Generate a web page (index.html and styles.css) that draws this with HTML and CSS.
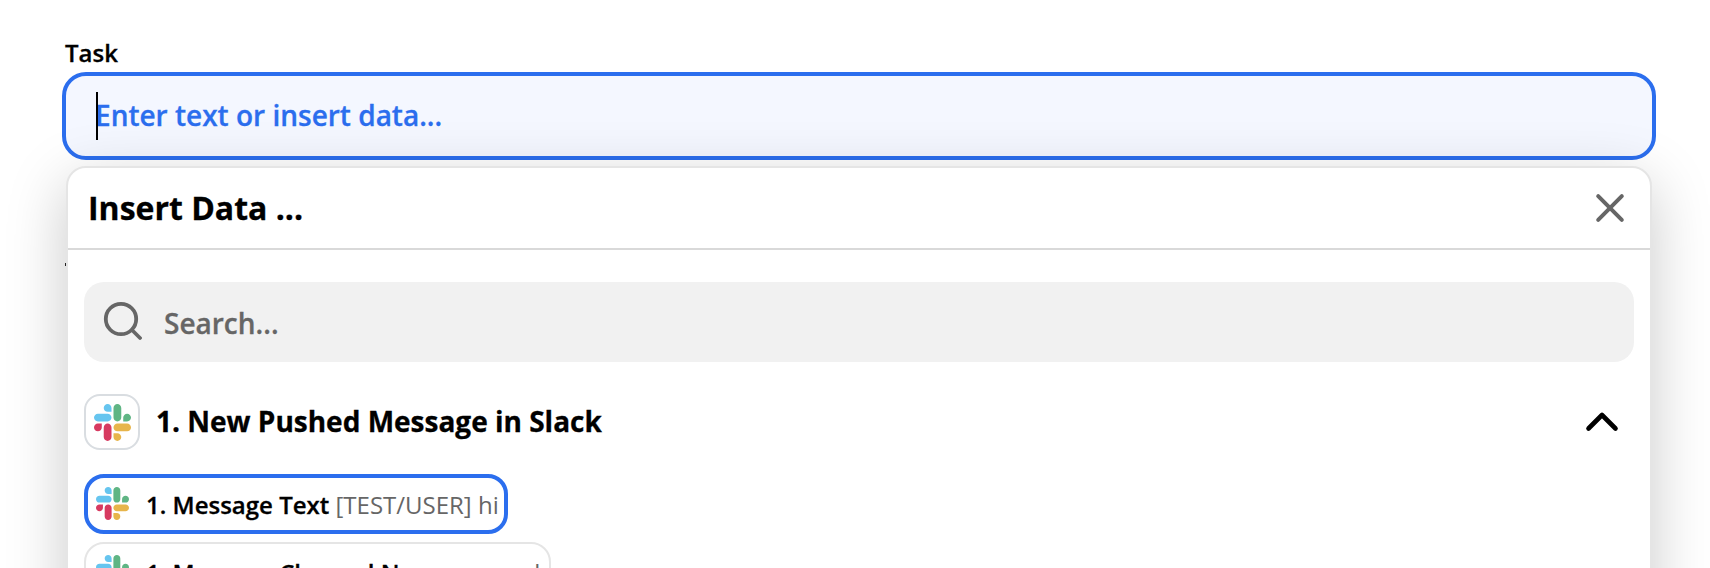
FILE: index.html
```html
<!DOCTYPE html>
<html lang="en">
<head>
<meta charset="utf-8">
<title>Insert Data</title>
<link rel="stylesheet" href="styles.css">
</head>
<body>
<svg class="defs" width="0" height="0" aria-hidden="true">
  <symbol id="slack" viewBox="0 0 122.8 122.8">
    <path fill="#d73a60" d="M25.8 77.6c0 7.1-5.8 12.9-12.9 12.9S0 84.7 0 77.6s5.8-12.9 12.9-12.9h12.9v12.9zM32.3 77.6c0-7.1 5.8-12.9 12.9-12.9s12.9 5.8 12.9 12.9v32.3c0 7.1-5.8 12.9-12.9 12.9s-12.9-5.8-12.9-12.9V77.6z"/>
    <path fill="#66c5ef" d="M45.2 25.8c-7.1 0-12.9-5.8-12.9-12.9S38.1 0 45.2 0s12.9 5.8 12.9 12.9v12.9H45.2zM45.2 32.3c7.1 0 12.9 5.8 12.9 12.9s-5.8 12.9-12.9 12.9H12.9C5.8 58.1 0 52.3 0 45.2s5.8-12.9 12.9-12.9h32.3z"/>
    <path fill="#5fb584" d="M97 45.2c0-7.1 5.8-12.9 12.9-12.9s12.9 5.8 12.9 12.9-5.8 12.9-12.9 12.9H97V45.2zM90.5 45.2c0 7.1-5.8 12.9-12.9 12.9s-12.9-5.8-12.9-12.9V12.9C64.7 5.8 70.5 0 77.6 0s12.9 5.8 12.9 12.9v32.3z"/>
    <path fill="#e7b54b" d="M77.6 97c7.1 0 12.9 5.8 12.9 12.9s-5.8 12.9-12.9 12.9-12.9-5.8-12.9-12.9V97h12.9zM77.6 90.5c-7.1 0-12.9-5.8-12.9-12.9s5.8-12.9 12.9-12.9h32.3c7.1 0 12.9 5.8 12.9 12.9s-5.8 12.9-12.9 12.9H77.6z"/>
  </symbol>
</svg>
<main class="field">
  <div class="label">Task</div>
  <div class="input"><span class="caret"></span><span class="placeholder">Enter text or insert data...</span></div>
  <section class="panel">
    <span class="tick"></span>
    <header class="panel-header">
      <h1 class="panel-title">Insert Data ...</h1>
      <svg class="close" width="32" height="32" viewBox="0 0 32 32"><path d="M4.2 4.2 27.8 27.8M27.8 4.2 4.2 27.8"/></svg>
    </header>
    <div class="panel-body">
      <div class="search">
        <svg class="search-icon" width="40" height="40" viewBox="0 0 40 40"><circle cx="19" cy="18" r="15.2"/><path d="M30 29 38 37"/></svg>
        <span class="search-text">Search...</span>
      </div>
      <div class="step">
        <span class="app-box"><svg width="37" height="37"><use href="#slack"/></svg></span>
        <h2 class="step-title">1. New Pushed Message in Slack</h2>
        <svg class="chevron" width="36" height="24" viewBox="0 0 36 24"><path d="M4.5 18.5 18 5 31.5 18.5"/></svg>
      </div>
      <div class="options">
        <div class="option option-active"><svg class="option-icon" width="33" height="33"><use href="#slack"/></svg><span class="option-text"><b class="option-name">1. Message Text</b> [TEST/USER] hi</span></div>
        <div class="option"><svg class="option-icon" width="33" height="33"><use href="#slack"/></svg><span class="option-text"><b class="option-name">1. Message Channel Name</b> general</span></div>
      </div>
    </div>
  </section>
</main>
</body>
</html>
```
FILE: styles.css
```css
* { box-sizing: border-box; }
html, body { margin: 0; height: 568px; overflow: hidden; background: #fff; }
body { font-family: "Open Sans", "Noto Sans", sans-serif; color: #000; }
svg { display: block; flex: none; fill: none; }
.defs { position: absolute; }
.field { height: 568px; overflow: hidden; padding: 36px 54px 0 62px; }
.label { height: 36px; padding-left: 3px; font-size: 24px; line-height: 34px; font-weight: 600; -webkit-text-stroke: .3px; }
.input {
  display: flex; align-items: center;
  height: 88px; padding: 0 30px;
  border: 4px solid #2b6eee; border-radius: 24px; background: #f4f7ff;
}
.caret { width: 2px; height: 48px; margin-right: -3px; background: #000; z-index: 1; }
.placeholder { padding-bottom: 2px; font-size: 28px; line-height: 38px; font-weight: 600; color: #2b6eee; -webkit-text-stroke: .3px; }
.panel {
  position: relative;
  margin: 6px 4px 0; height: 620px;
  border: 2px solid #e5e5e5; border-radius: 20px; background: #fff;
  box-shadow: 0 16px 60px rgba(0, 0, 0, .21);
}
.tick { position: absolute; left: -3px; top: 95px; width: 1px; height: 3px; background: #222; }
.panel-header {
  display: flex; align-items: center; justify-content: space-between;
  height: 82px; padding: 0 24px 0 20px; border-bottom: 2px solid #d9d9d9;
}
.panel-title { margin: 0; font-size: 32px; line-height: 44px; font-weight: 700; -webkit-text-stroke: .3px; }
.close { stroke: #666; stroke-width: 4; stroke-linecap: round; }
.panel-body { padding: 32px 16px 0; }
.search {
  display: flex; align-items: center; gap: 22px;
  height: 80px; padding-left: 18px; border-radius: 20px; background: #f1f1f1;
}
.search-icon { margin-top: -2px; stroke: #666; stroke-width: 3.8; stroke-linecap: round; }
.search-text { padding-top: 2px; font-size: 28px; line-height: 38px; font-weight: 600; color: #666; -webkit-text-stroke: .3px; }
.step { display: flex; align-items: center; height: 56px; margin-top: 32px; padding-right: 14px; }
.app-box {
  display: flex; align-items: center; justify-content: center;
  width: 56px; height: 56px; border: 2px solid #d9dde1; border-radius: 16px;
}
.step-title { flex: 1; margin: 0 0 2px 16px; font-size: 28px; line-height: 38px; font-weight: 700; -webkit-text-stroke: .3px; }
.chevron { stroke: #000; stroke-width: 4.6; stroke-linecap: round; stroke-linejoin: round; }
.options { display: flex; flex-direction: column; align-items: flex-start; gap: 8px; margin-top: 24px; }
.option {
  display: flex; align-items: center; gap: 17.5px;
  height: 60px; padding: 0 9px 0 9.5px; border: 2px solid #e5e5e5; border-radius: 20px;
}
.option-active { padding: 0 5px 0 7.5px; border: 4px solid #2b6eee; }
.option-icon { margin-top: -1px; }
.option-text { padding-top: 1px; font-size: 24px; line-height: 34px; color: #666; white-space: nowrap; }
.option-name { font-weight: 600; color: #000; -webkit-text-stroke: .3px; }
```
